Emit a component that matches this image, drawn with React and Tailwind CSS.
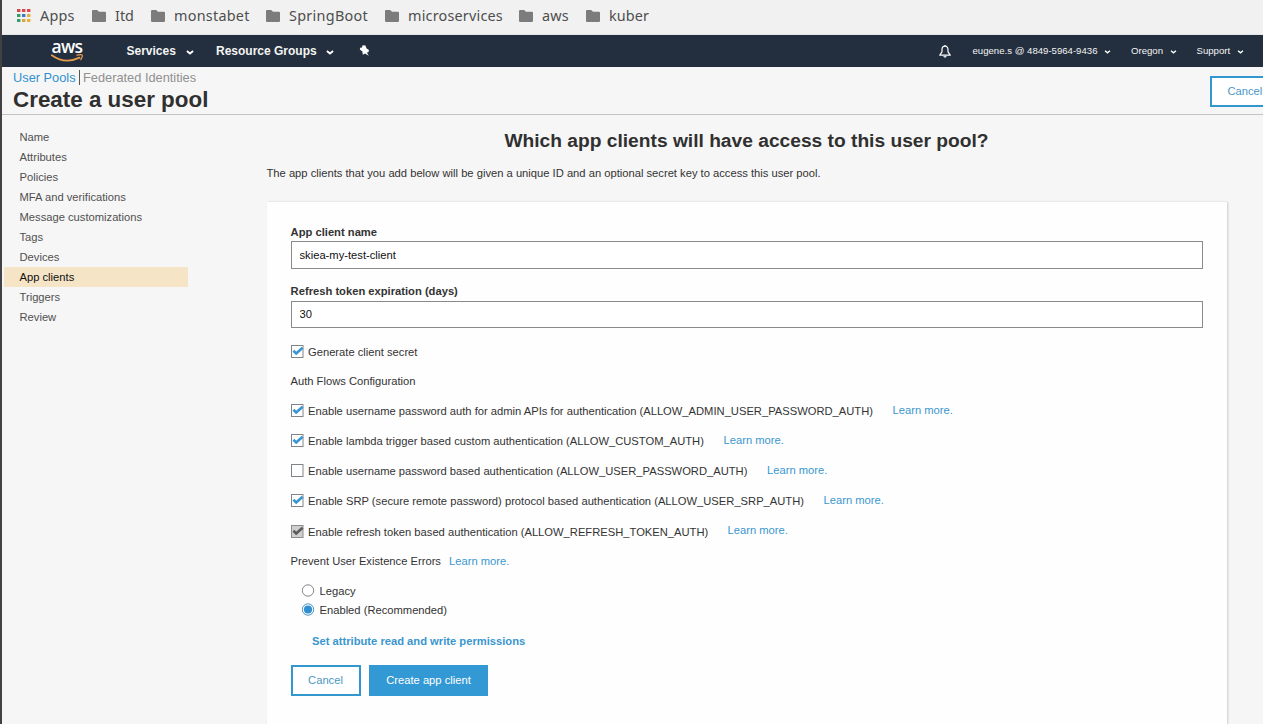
import React from "react";

const bookmarks = [
  { label: "Itd", slot: "w-[59px]", text: "tracking-[0px]" },
  { label: "monstabet", slot: "w-[115px]", text: "tracking-[0.25px]" },
  { label: "SpringBoot", slot: "w-[119px]", text: "tracking-[0.3px]" },
  { label: "microservices", slot: "w-[134px]", text: "tracking-[0.2px]" },
  { label: "aws", slot: "w-[67px]", text: "tracking-[0.2px]" },
  { label: "kuber", slot: "w-[80px]", text: "tracking-[0.1px]" },
];

const steps = [
  "Name",
  "Attributes",
  "Policies",
  "MFA and verifications",
  "Message customizations",
  "Tags",
  "Devices",
  "App clients",
  "Triggers",
  "Review",
];

const flows = [
  { label: "Enable username password auth for admin APIs for authentication (ALLOW_ADMIN_USER_PASSWORD_AUTH)", slot: "w-[584.5px]", row: "mt-[10px]", link: "pb-[2px]", state: "on" },
  { label: "Enable lambda trigger based custom authentication (ALLOW_CUSTOM_AUTH)", slot: "w-[415.5px]", row: "mt-[10px]", link: "pb-[2px]", state: "on" },
  { label: "Enable username password based authentication (ALLOW_USER_PASSWORD_AUTH)", slot: "w-[459px]", row: "mt-[10px]", link: "pb-[2px]", state: "off" },
  { label: "Enable SRP (secure remote password) protocol based authentication (ALLOW_USER_SRP_AUTH)", slot: "w-[515.5px]", row: "mt-[10px]", link: "pb-[2px]", state: "on" },
  { label: "Enable refresh token based authentication (ALLOW_REFRESH_TOKEN_AUTH)", slot: "w-[419.5px]", row: "mt-[11px]", link: "pb-[4px]", state: "disabled" },
];

function Folder() {
  return (
    <svg className="mr-[9px] h-3 w-3.5 shrink-0" viewBox="0 0 14 12" fill="#7c7c7c">
      <path d="M0 1Q0 0 1 0H5.2L7 1.8H13Q14 1.8 14 2.8V11Q14 12 13 12H1Q0 12 0 11Z" />
    </svg>
  );
}

function AppsGrid() {
  const colors = ["#d84a4a", "#d84a4a", "#d84a4a", "#2f9e6b", "#3b78c9", "#e3b23c", "#2f9e6b", "#d9a441", "#e3b23c"];
  return (
    <svg className="h-[13px] w-[14px] shrink-0" viewBox="0 0 14 13">
      {colors.map((c, i) => (
        <rect key={i} x={(i % 3) * 5} y={Math.floor(i / 3) * 5} width="3.4" height="3" fill={c} />
      ))}
    </svg>
  );
}

function Caret({ className = "" }) {
  return (
    <svg className={"shrink-0 " + className} viewBox="0 0 8 5" fill="none" stroke="#fff" strokeWidth="1.8">
      <path d="M0.9 1L4 3.5L7.1 1" />
    </svg>
  );
}

function Check({ state }) {
  const disabled = state === "disabled";
  return (
    <svg className="mr-[4px] mb-[1px] h-[13px] w-[13px] shrink-0" viewBox="0 0 13 13">
      <rect x="0.5" y="0.5" width="11.5" height="12" fill={disabled ? "#cfcfcf" : "#fff"} stroke={disabled ? "#8c8c8c" : "#808488"} />
      {state !== "off" && (
        <path d="M2.4 5.8L5.2 8.4L11.6 2.8" fill="none" stroke={disabled ? "#5c5c5c" : "#3a96d2"} strokeWidth="2.7" />
      )}
    </svg>
  );
}

function Radio({ on }) {
  return (
    <svg className="mr-[4.5px] h-[13px] w-[13px] shrink-0" viewBox="0 0 13 13">
      <circle cx="6" cy="6.5" r="5.7" fill="#fff" stroke={on ? "#4b93bf" : "#808488"} strokeWidth="1" />
      {on && <circle cx="6" cy="6.5" r="4.1" fill="#2f8fd0" />}
    </svg>
  );
}

function Bookmarks() {
  return (
    <div className="flex h-[35px] items-center border-b border-[#e2e6e7] bg-[#f1f1f1] pb-[3px] pl-[15px] font-['Noto_Sans',sans-serif] text-[14.4px] text-[#4e4e4e]">
      <AppsGrid />
      <span className="ml-[9px] w-[52px] tracking-[0.2px]">Apps</span>
      {bookmarks.map((b) => (
        <div key={b.label} className={"flex shrink-0 items-center whitespace-nowrap " + b.slot}>
          <Folder />
          <span className={b.text}>{b.label}</span>
        </div>
      ))}
    </div>
  );
}

function Nav() {
  return (
    <nav className="flex h-8 items-center bg-[#232f3e] pl-[48px] text-[#f4f4f4]">
      <div className="flex h-8 w-[34px] flex-col items-center">
        <span className="mt-[1px] h-[16px] font-['Open_Sans',sans-serif] text-[17.5px] leading-[20px] font-semibold tracking-[-0.7px] text-white">aws</span>
        <svg className="mt-[1px] h-[10px] w-[34px]" viewBox="0 0 34 10" fill="none" stroke="#e69a4c" strokeWidth="1.8" strokeLinecap="round">
          <path d="M1.8 2.2Q15 11.6 29.5 4.6" />
          <path d="M27 2.2Q31.5 1.2 32.3 2.2Q32.8 3.8 30.8 6.6" strokeWidth="1.3" />
        </svg>
      </div>
      <span className="ml-[42.5px] w-[59px] whitespace-nowrap text-[12px] font-bold">Services</span>
      <Caret className="mt-[2px] h-[5px] w-[8px]" />
      <span className="ml-[22.5px] w-[110px] whitespace-nowrap text-[12px] font-bold">Resource Groups</span>
      <Caret className="mt-[2px] h-[5px] w-[8px]" />
      <svg className="mb-[2px] ml-[25px] h-[11px] w-[11px]" viewBox="0 0 11 11" fill="#fff">
        <path d="M3.6 0.2L6.4 0.4L7.6 3.6L10 5L9.4 7.2L7.8 7.4L9.8 10.8L6 8.4L3.8 9.8L3.4 6.4L0.8 4.6L1.2 2.8L3 2.6Z" />
      </svg>
      <svg className="mt-[1px] ml-[569px] h-[13px] w-[12px]" viewBox="0 0 12 13" fill="none" stroke="#fff" strokeWidth="1.2" strokeLinejoin="round">
        <path d="M6 1.2C3.8 1.2 3 2.8 3 4.8V6.8L0.8 10.2H11.2L9 6.8V4.8C9 2.8 8.2 1.2 6 1.2Z" />
        <path d="M4.7 11.2Q6 13 7.3 11.2M6 0V1.2" />
      </svg>
      <span className="ml-[21.5px] w-[131.5px] whitespace-nowrap text-[9.6px]">eugene.s @ 4849-5964-9436</span>
      <Caret className="mt-[1px] h-[4px] w-[7px]" />
      <span className="ml-[20px] w-[38.5px] whitespace-nowrap text-[9.6px]">Oregon</span>
      <Caret className="mt-[1px] h-[4px] w-[7px]" />
      <span className="ml-[20px] w-[40px] whitespace-nowrap text-[9.6px]">Support</span>
      <Caret className="mt-[1px] h-[4px] w-[7px]" />
    </nav>
  );
}

function Learn() {
  return <a className="text-[#3a96cf]">Learn more.</a>;
}

export default function App() {
  return (
    <div className="h-[724px] w-[1263px] overflow-hidden border-l-2 border-[#424242] bg-[#f6f6f6] font-['Liberation_Sans',Arial,sans-serif] text-[11.19px] leading-[20px] text-[#333]">
      <Bookmarks />
      <Nav />
      <header className="flex h-[48px] justify-between border-b border-[#c3c3c3] pl-[11px]">
        <div>
          <div className="flex h-[19px] items-center pt-[2px] text-[12.8px]">
            <a className="w-[66px] whitespace-nowrap text-[#3292cf]">User Pools</a>
            <span className="h-[15px] w-px bg-[#555]" />
            <a className="ml-[3px] whitespace-nowrap text-[#909090]">Federated Identities</a>
          </div>
          <h1 className="text-[22.4px] leading-[27px] font-bold whitespace-nowrap text-[#303030]">Create a user pool</h1>
        </div>
        <button className="mt-[9px] h-[31px] w-[53px] border-2 border-r-0 border-[#3296cf] bg-white pb-[2px] pl-[15.5px] text-left text-[#4b97c4]">Cancel</button>
      </header>

      <div className="flex">
        <aside className="w-[265px] shrink-0 pt-[12px] pl-[2px]">
          {steps.map((s) => (
            <div key={s} className={"h-5 w-[184px] pl-[15.5px] " + (s === "App clients" ? "bg-[#f5e4c5] text-[#111]" : "text-[#505050]")}>
              {s}
            </div>
          ))}
        </aside>

        <main className="w-[961px] shrink-0">
          <h2 className="mt-[13px] h-[26px] pr-[2px] text-center text-[19.2px] leading-[26px] font-bold text-[#303030]">
            Which app clients will have access to this user pool?
          </h2>
          <p className="mt-[9px] -ml-[0.5px] h-5">
            The app clients that you add below will be given a unique ID and an optional secret key to access this user pool.
          </p>
          <section className="mt-[19px] h-[540px] w-[960px] bg-[#fefefe] px-6 pt-[22px] shadow-[1px_0px_2px_#ccc]">
            <div className="-ml-[0.4px] h-[17px] leading-[17px] font-bold">App client name</div>
            <div className="flex h-7 items-center border border-[#8a8a8a] bg-white pl-[7.5px] text-[#111]">skiea-my-test-client</div>
            <div className="mt-[14px] -ml-[0.4px] h-[18px] leading-[17px] font-bold">Refresh token expiration (days)</div>
            <div className="flex h-[27px] items-center border border-[#8a8a8a] bg-white pb-[1px] pl-[7.5px] text-[#111]">30</div>

            <div className="mt-[14px] flex h-5 items-center">
              <Check state="on" />
              Generate client secret
            </div>
            <div className="mt-[9px] -ml-[0.5px] h-5">Auth Flows Configuration</div>

            {flows.map((f) => (
              <div key={f.label} className={"flex h-5 items-center whitespace-nowrap " + f.row}>
                <Check state={f.state} />
                <span className={f.slot}>{f.label}</span>
                <span className={f.link}>
                  <Learn />
                </span>
              </div>
            ))}

            <div className="mt-[9px] -ml-[0.5px] flex h-5">
              <span className="w-[158.5px]">Prevent User Existence Errors</span>
              <Learn />
            </div>
            <div className="mt-[10px] flex h-[19px] items-center pl-[11px]">
              <Radio />
              Legacy
            </div>
            <div className="flex h-[19px] items-center pl-[11px]">
              <Radio on />
              Enabled (Recommended)
            </div>
            <a className="mt-[12px] block h-5 pl-[21px] font-bold text-[#3a96cf]">Set attribute read and write permissions</a>
            <div className="mt-[14px] flex gap-2">
              <button className="h-[31px] w-[70px] border-2 border-[#3296cf] bg-white pr-[1px] pb-[2px] text-center text-[#4b97c4]">Cancel</button>
              <button className="h-[31px] w-[119px] bg-[#3399d4] pb-[2px] text-white">Create app client</button>
            </div>
          </section>
        </main>
      </div>
    </div>
  );
}
